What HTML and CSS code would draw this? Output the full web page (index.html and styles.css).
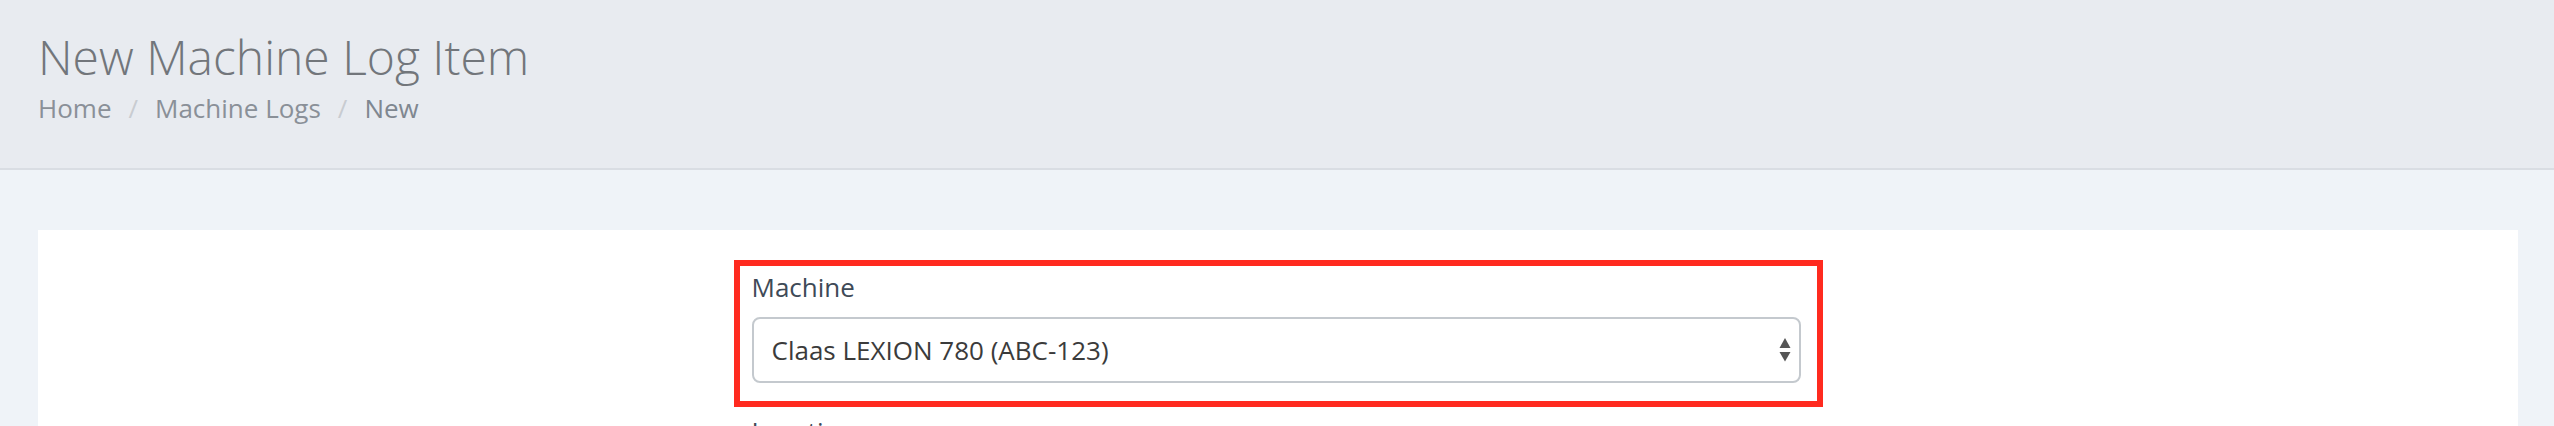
FILE: index.html
```html
<!DOCTYPE html>
<html lang="en">
<head>
    <meta charset="UTF-8">
    <meta name="viewport" content="width=device-width, initial-scale=1.0">
    <title>New Machine Log Item</title>
    <link rel="stylesheet" href="styles.css">
</head>
<body>
    <header class="page-header">
        <h1>New Machine Log Item</h1>
        <ol class="breadcrumb">
            <li><a href="#">Home</a></li>
            <li><a href="#">Machine Logs</a></li>
            <li class="active">New</li>
        </ol>
    </header>

    <main class="page-body">
        <div class="card">
            <form class="log-form">
                <div class="form-group highlight">
                    <label for="machine">Machine</label>
                    <div class="select-wrap">
                        <select id="machine" class="form-select">
                            <option>Claas LEXION 780 (ABC-123)</option>
                        </select>
                        <svg class="select-arrows" width="12" height="24" viewBox="0 0 12 24">
                            <path d="M6 0 L11.5 10 L0.5 10 Z" fill="#555"/>
                            <path d="M0.5 14 L11.5 14 L6 23.5 Z" fill="#555"/>
                        </svg>
                    </div>
                </div>
                <div class="form-group next">
                    <label for="location">Location</label>
                </div>
            </form>
        </div>
    </main>
</body>
</html>
```

FILE: styles.css
```css
/* Reset */
* {
    margin: 0;
    padding: 0;
    box-sizing: border-box;
}

body {
    font-family: "Open Sans", "Liberation Sans", sans-serif;
    background: #eff3f8;
    color: #3e4a57;
    overflow: hidden;
}

/* Header */
.page-header {
    height: 170px;
    padding: 29px 0 0 38px;
    background: #e8ebf0;
    border-bottom: 2px solid #d9dde3;
}

.page-header h1 {
    font-size: 48px;
    font-weight: 300;
    line-height: 56px;
    color: #72767b;
}

.breadcrumb {
    list-style: none;
    display: flex;
    margin-top: 4px;
    font-size: 26px;
    line-height: 39px;
}

.breadcrumb li {
    color: #7f8790;
}

.breadcrumb li a {
    color: #8a9098;
    text-decoration: none;
}

.breadcrumb li + li::before {
    content: "/";
    color: #c8ccd1;
    padding: 0 17px 0 17px;
}

/* Body */
.page-body {
    padding: 60px 36px 0 38px;
}

.card {
    background: #fff;
    min-height: 400px;
    padding-top: 30px;
}

.log-form {
    width: 1089px;
    margin: 0 auto;
}

.form-group label {
    display: block;
    font-size: 26px;
    line-height: 36px;
    color: #3e4a57;
}

.highlight {
    border: 6px solid #ff2a1f;
    padding: 3px 16px 18px 12px;
}

.select-wrap {
    position: relative;
    margin-top: 12px;
}

.form-select {
    display: block;
    width: 100%;
    height: 66px;
    padding: 0 40px 0 18px;
    font-family: "Open Sans", "Liberation Sans", sans-serif;
    font-size: 26px;
    color: #3b3b3b;
    background: #fff;
    border: 2px solid #c4c9ce;
    border-radius: 8px;
    appearance: none;
    -webkit-appearance: none;
}

/* native-looking up/down arrows */
.select-arrows {
    position: absolute;
    right: 10px;
    top: 21px;
    pointer-events: none;
}

.next {
    padding: 6px 0 0 18px;
}
```
